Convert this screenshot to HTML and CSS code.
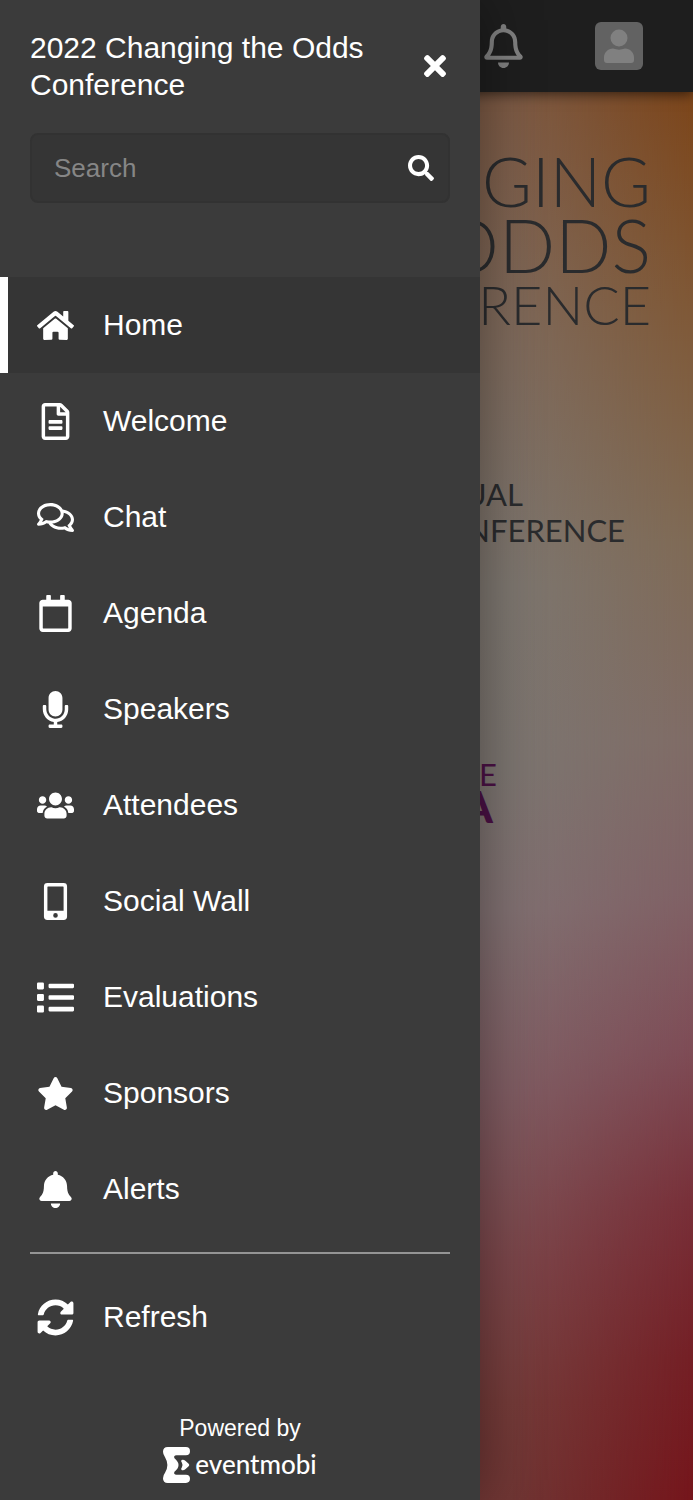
FILE: index.html
```html
<!DOCTYPE html>
<html lang="en">
<head>
<meta charset="utf-8">
<meta name="viewport" content="width=device-width, initial-scale=1">
<title>2022 Changing the Odds Conference</title>
<link rel="stylesheet" href="styles.css">
</head>
<body>
<div class="page">
  <header class="topbar">
    <button class="topbar-button" type="button" aria-label="Alerts">
      <svg class="topbar-bell" viewBox="0 0 448 512"><path d="M439.39 362.29c-19.32-20.76-55.47-51.99-55.47-154.29 0-77.7-54.48-139.9-127.94-155.16V32c0-17.67-14.32-32-31.98-32s-31.98 14.33-31.98 32v20.84C118.56 68.1 64.08 130.3 64.08 208c0 102.3-36.15 133.53-55.47 154.29-6 6.45-8.66 14.16-8.61 21.71.11 16.4 12.98 32 32.1 32h383.8c19.12 0 32-15.6 32.1-32 .05-7.55-2.61-15.27-8.61-21.71zM67.53 368c21.22-27.97 44.42-74.33 44.53-159.42 0-.2-.06-.38-.06-.58 0-61.86 50.14-112 112-112s112 50.14 112 112c0 .2-.06.38-.06.58.11 85.1 23.31 131.46 44.53 159.42H67.53zM224 512c35.32 0 63.97-28.65 63.97-64H160.03c0 35.35 28.65 64 63.97 64z"/></svg>
    </button>
    <button class="topbar-button avatar" type="button" aria-label="Profile">
      <svg class="avatar-icon" viewBox="0 0 30 34"><circle cx="15" cy="9" r="8.5"/><path d="M9 19.5c4 1.5 8 1.5 12 0 5 0 9 4 9 9V31q0 3-3 3H3q-3 0-3-3v-2.500c0-5 4-9 9-9z"/></svg>
    </button>
  </header>
  <main class="hero">
    <h1 class="hero-title">
      <span class="hero-line hero-line-first">CHANGING</span>
      <span class="hero-line hero-line-second">THE ODDS</span>
      <span class="hero-line hero-line-third">CONFERENCE</span>
    </h1>
    <p class="hero-kind"><span class="hero-kind-first">VIRTUAL</span><span>CONFERENCE</span></p>
    <p class="hero-place"><span class="hero-place-first">E</span><strong class="hero-place-name">A</strong></p>
  </main>

  <aside class="drawer">
    <div class="drawer-head">
      <h2 class="drawer-title">2022 Changing the Odds Conference</h2>
      <button class="close" type="button" aria-label="Close menu">
        <svg class="close-icon" viewBox="0 0 352 512"><path d="M242.72 256l100.07-100.07c12.28-12.28 12.28-32.19 0-44.48l-22.24-22.24c-12.28-12.28-32.19-12.28-44.48 0L176 189.28 75.93 89.21c-12.28-12.28-32.19-12.28-44.48 0L9.21 111.45c-12.28 12.28-12.28 32.19 0 44.48L109.28 256 9.21 356.07c-12.28 12.28-12.28 32.19 0 44.48l22.24 22.24c12.28 12.28 32.2 12.28 44.48 0L176 322.72l100.07 100.07c12.28 12.28 32.2 12.28 44.48 0l22.24-22.24c12.28-12.28 12.28-32.19 0-44.48L242.72 256z"/></svg>
      </button>
    </div>
    <form class="search">
      <input class="search-input" type="text" placeholder="Search" aria-label="Search">
      <button class="search-button" type="button" aria-label="Run search">
        <svg class="search-icon" viewBox="0 0 512 512"><path d="M505 442.7L405.3 343c-4.500-4.500-10.600-7-17-7H372c27.600-35.300 44-79.700 44-128C416 93.100 322.900 0 208 0S0 93.100 0 208s93.100 208 208 208c48.300 0 92.700-16.400 128-44v16.300c0 6.400 2.500 12.500 7 17l99.700 99.700c9.400 9.400 24.600 9.400 33.900 0l28.300-28.300c9.400-9.400 9.400-24.600.1-34zM208 336c-70.700 0-128-57.200-128-128 0-70.700 57.200-128 128-128 70.700 0 128 57.200 128 128 0 70.700-57.200 128-128 128z"/></svg>
      </button>
    </form>
    <nav class="menu">
      <a class="item item-active" href="#home" aria-current="page"><svg class="icon" viewBox="0 0 576 512"><path d="M280.370 148.260L96 300.110V464a16 16 0 0 0 16 16l112.060-.29a16 16 0 0 0 15.920-16V368a16 16 0 0 1 16-16h64a16 16 0 0 1 16 16v95.640a16 16 0 0 0 16 16.050L464 480a16 16 0 0 0 16-16V300L295.670 148.260a12.190 12.190 0 0 0-15.300 0zM571.600 251.470L488 182.560V44.050a12 12 0 0 0-12-12h-56a12 12 0 0 0-12 12v72.610L318.470 43a48 48 0 0 0-61 0L4.340 251.470a12 12 0 0 0-1.600 16.900l25.500 31A12 12 0 0 0 45.150 301l235.220-193.740a12.190 12.190 0 0 1 15.300 0L530.900 301a12 12 0 0 0 16.900-1.600l25.500-31a12 12 0 0 0-1.700-16.930z"/></svg>Home</a>
      <a class="item" href="#welcome"><svg class="icon" viewBox="0 0 384 512"><path d="M288 248v28c0 6.600-5.400 12-12 12H108c-6.600 0-12-5.400-12-12v-28c0-6.600 5.400-12 12-12h168c6.600 0 12 5.400 12 12zm-12 72H108c-6.600 0-12 5.400-12 12v28c0 6.600 5.400 12 12 12h168c6.600 0 12-5.400 12-12v-28c0-6.600-5.400-12-12-12zm108-188.100V464c0 26.500-21.500 48-48 48H48c-26.500 0-48-21.500-48-48V48C0 21.500 21.500 0 48 0h204.100C264.800 0 277 5.100 286 14.100L369.900 98c9 8.900 14.100 21.200 14.100 33.900zm-128-80V128h76.100L256 51.900zM336 464V176H232c-13.300 0-24-10.700-24-24V48H48v416h288z"/></svg>Welcome</a>
      <a class="item" href="#chat"><svg class="icon" viewBox="0 0 576 512"><path d="M532 386.200c27.500-27.100 44-61.100 44-98.200 0-80-76.500-146.100-176.200-157.900C368.300 72.500 294.300 32 208 32 93.100 32 0 103.600 0 192c0 37 16.500 71 44 98.200-15.300 30.700-37.300 54.500-37.700 54.900-6.300 6.700-8.100 16.500-4.400 25 3.600 8.500 12 14 21.200 14 53.500 0 96.700-20.200 125.200-38.800 9.200 2.100 18.700 3.700 28.400 4.900C208.100 407.600 281.800 448 368 448c20.800 0 40.800-2.400 59.800-6.800C456.300 459.700 499.400 480 553 480c9.200 0 17.500-5.500 21.200-14 3.600-8.500 1.900-18.300-4.400-25-.4-.3-22.500-24.100-37.800-54.800zm-392.800-92.300L122.100 305c-14.100 9.100-28.500 16.300-43.100 21.400 2.700-4.700 5.400-9.700 8-14.800l15.500-31.100L77.700 256C64.200 242.600 48 220.700 48 192c0-60.700 73.300-112 160-112s160 51.300 160 112-73.300 112-160 112c-16.500 0-33-1.900-49-5.600l-19.800-4.500zM498.300 352l-24.700 24.400 15.500 31.100c2.600 5.100 5.300 10.100 8 14.800-14.600-5.100-29-12.300-43.100-21.400l-17.100-11.100-19.900 4.600c-16 3.700-32.500 5.600-49 5.600-54 0-102.200-20.100-131.300-49.700C338 339.500 416 272.900 416 192c0-3.400-.4-6.700-.7-10C479.700 196.500 528 238.800 528 288c0 28.700-16.200 50.600-29.700 64z"/></svg>Chat</a>
      <a class="item" href="#agenda"><svg class="icon" viewBox="0 0 448 512"><path d="M400 64h-48V12c0-6.600-5.400-12-12-12h-40c-6.600 0-12 5.400-12 12v52H160V12c0-6.600-5.400-12-12-12h-40c-6.600 0-12 5.400-12 12v52H48C21.500 64 0 85.500 0 112v352c0 26.500 21.500 48 48 48h352c26.500 0 48-21.500 48-48V112c0-26.500-21.500-48-48-48zm-6 400H54c-3.300 0-6-2.700-6-6V160h352v298c0 3.300-2.700 6-6 6z"/></svg>Agenda</a>
      <a class="item" href="#speakers"><svg class="icon" viewBox="0 0 352 512"><path d="M176 352c53.020 0 96-42.980 96-96V96c0-53.020-42.980-96-96-96S80 42.980 80 96v160c0 53.020 42.980 96 96 96zm160-160h-16c-8.840 0-16 7.160-16 16v48c0 74.800-64.490 134.820-140.790 127.380C96.710 376.890 48 317.110 48 250.300V208c0-8.840-7.160-16-16-16H16c-8.840 0-16 7.160-16 16v40.160c0 89.640 63.970 169.550 152 181.690V464H96c-8.840 0-16 7.160-16 16v16c0 8.840 7.160 16 16 16h160c8.840 0 16-7.160 16-16v-16c0-8.840-7.160-16-16-16h-56v-33.770C285.710 418.470 352 344.900 352 256v-48c0-8.840-7.160-16-16-16z"/></svg>Speakers</a>
      <a class="item" href="#attendees"><svg class="icon" viewBox="0 0 640 512"><path d="M96 224c35.300 0 64-28.700 64-64s-28.700-64-64-64-64 28.700-64 64 28.700 64 64 64zm448 0c35.300 0 64-28.700 64-64s-28.700-64-64-64-64 28.700-64 64 28.700 64 64 64zm32 32h-64c-17.600 0-33.500 7.100-45.100 18.600 40.300 22.100 68.900 62 75.100 109.400h66c17.700 0 32-14.300 32-32v-32c0-35.300-28.700-64-64-64zm-256 0c61.900 0 112-50.100 112-112S381.900 32 320 32 208 82.100 208 144s50.100 112 112 112zm76.800 32h-8.300c-20.800 10-43.900 16-68.500 16s-47.600-6-68.500-16h-8.300C179.600 288 128 339.600 128 403.200V432c0 26.500 21.500 48 48 48h288c26.500 0 48-21.500 48-48v-28.800c0-63.600-51.600-115.200-115.200-115.200zm-223.700-13.400C161.500 263.100 145.600 256 128 256H64c-35.300 0-64 28.700-64 64v32c0 17.700 14.300 32 32 32h65.900c6.300-47.400 34.900-87.300 75.200-109.400z"/></svg>Attendees</a>
      <a class="item" href="#social-wall"><svg class="icon" viewBox="0 0 320 512"><path fill-rule="evenodd" d="M48 0h224a48 48 0 0 1 48 48v416a48 48 0 0 1-48 48H48a48 48 0 0 1-48-48V48A48 48 0 0 1 48 0zm6 48a6 6 0 0 0-6 6v330h224V54a6 6 0 0 0-6-6zm106 368a32 32 0 1 0 0 64 32 32 0 0 0 0-64z"/></svg>Social Wall</a>
      <a class="item" href="#evaluations"><svg class="icon" viewBox="0 0 512 512"><path d="M16 48h64a16 16 0 0 1 16 16v64a16 16 0 0 1-16 16H16a16 16 0 0 1-16-16V64a16 16 0 0 1 16-16zm0 160h64a16 16 0 0 1 16 16v64a16 16 0 0 1-16 16H16a16 16 0 0 1-16-16v-64a16 16 0 0 1 16-16zm0 160h64a16 16 0 0 1 16 16v64a16 16 0 0 1-16 16H16a16 16 0 0 1-16-16v-64a16 16 0 0 1 16-16zM176 64h320a16 16 0 0 1 16 16v32a16 16 0 0 1-16 16H176a16 16 0 0 1-16-16V80a16 16 0 0 1 16-16zm0 160h320a16 16 0 0 1 16 16v32a16 16 0 0 1-16 16H176a16 16 0 0 1-16-16v-32a16 16 0 0 1 16-16zm0 160h320a16 16 0 0 1 16 16v32a16 16 0 0 1-16 16H176a16 16 0 0 1-16-16v-32a16 16 0 0 1 16-16z"/></svg>Evaluations</a>
      <a class="item" href="#sponsors"><svg class="icon" viewBox="0 0 576 512"><path d="M259.300 17.800L194 150.200 47.900 171.500c-26.200 3.800-36.700 36.100-17.700 54.600l105.700 103-25 145.500c-4.500 26.300 23.200 46 46.400 33.700L288 439.600l130.700 68.700c23.200 12.200 50.900-7.400 46.400-33.700l-25-145.500 105.700-103c19-18.500 8.500-50.800-17.700-54.600L382 150.200 316.700 17.800c-11.700-23.600-45.600-23.900-57.400 0z"/></svg>Sponsors</a>
      <a class="item" href="#alerts"><svg class="icon" viewBox="0 0 448 512"><path d="M224 512c35.320 0 63.970-28.650 63.970-64H160.030c0 35.350 28.650 64 63.970 64zm215.390-149.710c-19.320-20.760-55.470-51.990-55.470-154.290 0-77.700-54.480-139.900-127.940-155.160V32c0-17.670-14.320-32-31.980-32s-31.980 14.330-31.980 32v20.840C118.560 68.100 64.080 130.300 64.080 208c0 102.300-36.150 133.530-55.470 154.290-6 6.450-8.660 14.160-8.610 21.710.11 16.400 12.980 32 32.100 32h383.800c19.120 0 32-15.600 32.100-32 .05-7.550-2.610-15.270-8.610-21.710z"/></svg>Alerts</a>
    </nav>
    <hr class="divider">
    <button class="item" type="button"><svg class="icon" viewBox="0 0 512 512"><path d="M370.720 133.280C339.458 104.008 298.888 87.962 255.848 88c-77.458.068-144.328 53.178-162.791 126.850-1.344 5.363-6.122 9.150-11.651 9.150H24.103c-7.498 0-13.194-6.807-11.807-14.176C33.933 94.924 134.813 8 256 8c66.448 0 126.791 26.136 171.315 68.685L463.030 40.970C478.149 25.851 504 36.559 504 57.941V192c0 13.255-10.745 24-24 24H345.941c-21.382 0-32.090-25.851-16.971-40.971l41.750-41.749zM32 296h134.059c21.382 0 32.090 25.851 16.971 40.971l-41.750 41.750c31.262 29.273 71.835 45.319 114.876 45.280 77.418-.07 144.315-53.144 162.787-126.849 1.344-5.363 6.122-9.150 11.651-9.150h57.304c7.498 0 13.194 6.807 11.807 14.176C478.067 417.076 377.187 504 256 504c-66.448 0-126.791-26.136-171.315-68.685L48.970 471.030C33.851 486.149 8 475.441 8 454.059V320c0-13.255 10.745-24 24-24z"/></svg>Refresh</button>
    <footer class="powered">
      <span>Powered by</span>
      <a class="brand" href="#eventmobi">
        <svg class="brand-mark" viewBox="0 0 80 106"><path d="M14 0H68Q80 0 80 12T68 24H40Q30 25 34 33Q46 43 46 53T34 73Q30 81 40 82H68Q80 82 80 94T68 106H14Q0 106 0 92Q0 84 6 76Q20 53 6 30Q0 22 0 14Q0 0 14 0z"/><path d="M55 38Q61 36 67 41L76 49Q80 53 76 57L67 65Q61 70 55 68Q52 65 56 60Q60 53 56 46Q52 41 55 38z"/></svg>
        <span class="brand-name">eventmobi</span>
      </a>
    </footer>
  </aside>
</div>
</body>
</html>
```
FILE: styles.css
```css
* {
  box-sizing: border-box;
}

body {
  margin: 0;
  font-family: "Liberation Sans", Arial, sans-serif;
  color: #fff;
}

button {
  border: 0;
  padding: 0;
  background: none;
  color: inherit;
  font: inherit;
}

svg {
  display: block;
  fill: currentColor;
}

.page {
  position: relative;
  display: flex;
  flex-direction: column;
  min-height: 100vh;
  overflow: hidden;
}

.topbar {
  z-index: 1;
  display: flex;
  justify-content: flex-end;
  align-items: center;
  gap: 72px;
  padding: 22px 50px;
  background: #1e1e1e;
  box-shadow: 0 2px 12px rgba(0, 0, 0, 0.6);
  color: #808080;
}

.topbar-bell {
  width: 39px;
  height: 44px;
}

.avatar {
  display: flex;
  align-items: center;
  justify-content: center;
  width: 48px;
  height: 48px;
  border-radius: 6px;
  background: #626262;
}

.avatar-icon {
  width: 30px;
  height: 34px;
}

.hero {
  position: relative;
  flex: 1;
  padding: 56px 42px;
  background: linear-gradient(#7d5a44 0%, #7e6a5c 18%, #7d766f 35%, #7c7570 48%, #807071 58%, #7f5c62 71%, #7b464a 83%, #743b39 93%, #703634 100%);
  color: #2a2b2d;
  font-family: Lato, sans-serif;
  text-align: right;
}

.hero::before {
  content: "";
  position: absolute;
  inset: 0;
  background: linear-gradient(#7c451a 0%, #7f5836 15%, #7f6a55 32%, #806c66 46%, #806165 57%, #7e4c56 68%, #782f38 79%, #741f25 90%, #75151b 100%);
  mask-image: linear-gradient(to right, transparent 74%, #000 100%);
}

.hero-title,
.hero-kind,
.hero-place {
  position: relative;
  display: flex;
  flex-direction: column;
  margin: 0;
  font-weight: 300;
}

.hero-line-first {
  font-size: 68px;
  line-height: 66px;
}

.hero-line-second {
  font-size: 74px;
  line-height: 62px;
}

.hero-line-third {
  font-size: 54px;
  line-height: 58px;
}

.hero-kind {
  padding: 142px 26px 0 0;
  font-size: 31px;
  font-weight: 400;
  line-height: 36px;
}

.hero-kind-first {
  padding-right: 102px;
}

.hero-place {
  padding: 210px 154px 0 0;
  color: #4b1145;
  font-size: 31px;
  font-weight: 400;
  line-height: 32px;
}

.hero-place-name {
  padding-right: 4px;
  font-size: 44px;
  font-weight: 900;
}

.drawer {
  position: absolute;
  inset: 0 auto 0 0;
  z-index: 2;
  display: flex;
  flex-direction: column;
  width: 480px;
  max-width: 100%;
  background: #3b3b3b;
  box-shadow: 0 0 56px rgba(0, 0, 0, 0.4);
}

.drawer-head {
  display: flex;
  align-items: center;
  justify-content: space-between;
  gap: 40px;
  padding: 29px 34px 30px 30px;
}

.drawer-title {
  margin: 0;
  font-size: 30px;
  font-weight: 400;
  line-height: 37px;
}

.close-icon {
  width: 22px;
  height: 32px;
}

.search {
  display: flex;
  align-items: center;
  height: 70px;
  margin: 0 30px 74px;
  padding: 0 14px 0 22px;
  border: 2px solid #323232;
  border-radius: 8px;
  background: #353535;
}

.search-input {
  flex: 1;
  min-width: 0;
  padding: 0;
  border: 0;
  outline: 0;
  background: none;
  color: #fff;
  font: 26px/32px "Liberation Sans", Arial, sans-serif;
}

.search-input::placeholder {
  color: #868686;
}

.search-icon {
  width: 26px;
  height: 26px;
}

.menu {
  display: flex;
  flex-direction: column;
}

.item {
  display: flex;
  align-items: center;
  gap: 29px;
  height: 96px;
  padding: 0 29px;
  border-left: 8px solid transparent;
  color: #fff;
  font-size: 30px;
  line-height: 36px;
  text-align: left;
  text-decoration: none;
}

.item-active {
  border-left-color: #fff;
  background: #353535;
}

.icon {
  width: 37px;
  height: 37px;
}

.divider {
  height: 2px;
  margin: 15px 30px;
  border: 0;
  background: #949494;
}

.powered {
  display: flex;
  flex-direction: column;
  align-items: center;
  gap: 6px;
  margin-top: auto;
  padding: 24px 0 17px;
  font-size: 23px;
  line-height: 26px;
}

.brand {
  display: flex;
  align-items: center;
  gap: 5px;
  color: #fff;
  text-decoration: none;
}

.brand-mark {
  width: 27px;
  height: 36px;
}

.brand-name {
  padding-bottom: 2px;
  font-family: Lato, sans-serif;
  font-size: 26px;
  font-weight: 500;
  line-height: 32px;
}
```
